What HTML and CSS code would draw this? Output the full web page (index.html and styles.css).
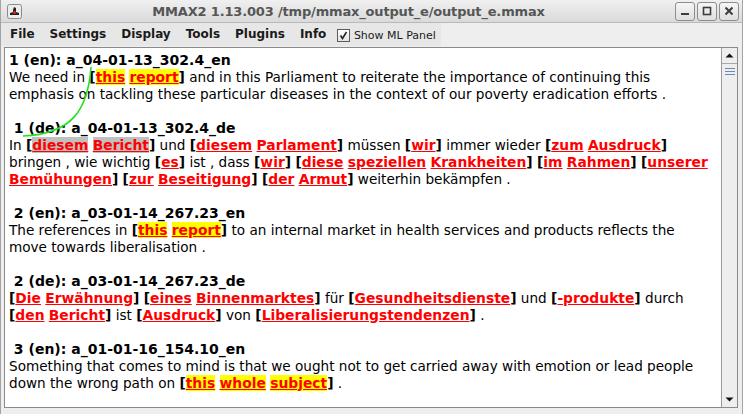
FILE: index.html
```html
<!DOCTYPE html>
<html>
<head>
<meta charset="utf-8">
<link rel="stylesheet" href="styles.css">
</head>
<body>
<div class="window">
  <div class="titlebar">
    <div class="appicon">
      <svg width="15" height="15" viewBox="0 0 15 15">
        <rect x="0.5" y="0.5" width="14" height="14" rx="2" fill="#ececec" stroke="#8c8c8c"/>
        <path d="M3 11 L12 11 L12 9 L9 8 L9 6 L6 6 L6 8 L3 9 Z" fill="#222"/>
        <path d="M6 6 L7 3 L9 4 L9 6 Z" fill="#222"/>
        <circle cx="7.5" cy="8.5" r="1.6" fill="#e02020"/>
      </svg>
    </div>
    <div class="title">MMAX2 1.13.003 /tmp/mmax_output_e/output_e.mmax</div>
    <div class="wbtns">
      <div class="wbtn"><svg width="10" height="10" viewBox="0 0 10 10"><rect x="1" y="7" width="8" height="2" fill="#3c3c3c"/></svg></div>
      <div class="wbtn"><svg width="10" height="10" viewBox="0 0 10 10"><rect x="1.5" y="1.5" width="7" height="7" fill="none" stroke="#3c3c3c" stroke-width="1.6"/></svg></div>
      <div class="wbtn"><svg width="10" height="10" viewBox="0 0 10 10"><path d="M1.5 1.5 L8.5 8.5 M8.5 1.5 L1.5 8.5" stroke="#3c3c3c" stroke-width="2"/></svg></div>
    </div>
  </div>
  <div class="menurow">
    <div class="menubar">
      <span class="menu">File</span>
      <span class="menu">Settings</span>
      <span class="menu">Display</span>
      <span class="menu">Tools</span>
      <span class="menu">Plugins</span>
      <span class="menu">Info</span>
      <span class="mlpanel"><span class="cb"><svg width="11" height="11" viewBox="0 0 11 11"><path d="M2.5 5.5 L4.5 8.5 L8.5 2" fill="none" stroke="#222" stroke-width="1.6"/></svg></span>Show ML Panel</span>
    </div>
  </div>
  <div class="pane">
    <div class="text">
      <div class="ln hd">1 (en): a_04-01-13_302.4_en</div>
      <div class="ln">We need in <b class="b">[</b><u class="m hl">this</u> <u class="m hl">report</u><b class="b">]</b> and in this Parliament to reiterate the importance of continuing this</div>
      <div class="ln">emphasis on tackling these particular diseases in the context of our poverty eradication efforts .</div>
      <div class="ln"></div>
      <div class="ln hd"> 1 (de): a_04-01-13_302.4_de</div>
      <div class="ln">In <b class="b">[</b><u class="m sel">diesem</u> <u class="m sel">Bericht</u><b class="b">]</b> und <b class="b">[</b><u class="m">diesem</u> <u class="m">Parlament</u><b class="b">]</b> müssen <b class="b">[</b><u class="m">wir</u><b class="b">]</b> immer wieder <b class="b">[</b><u class="m">zum</u> <u class="m">Ausdruck</u><b class="b">]</b></div>
      <div class="ln">bringen , wie wichtig <b class="b">[</b><u class="m">es</u><b class="b">]</b> ist , dass <b class="b">[</b><u class="m">wir</u><b class="b">]</b> <b class="b">[</b><u class="m">diese</u> <u class="m">speziellen</u> <u class="m">Krankheiten</u><b class="b">]</b> <b class="b">[</b><u class="m">im</u> <u class="m">Rahmen</u><b class="b">]</b> <b class="b">[</b><u class="m">unserer</u></div>
      <div class="ln"><u class="m">Bemühungen</u><b class="b">]</b> <b class="b">[</b><u class="m">zur</u> <u class="m">Beseitigung</u><b class="b">]</b> <b class="b">[</b><u class="m">der</u> <u class="m">Armut</u><b class="b">]</b> weiterhin bekämpfen .</div>
      <div class="ln"></div>
      <div class="ln hd"> 2 (en): a_03-01-14_267.23_en</div>
      <div class="ln">The references in <b class="b">[</b><u class="m hl">this</u> <u class="m hl">report</u><b class="b">]</b> to an internal market in health services and products reflects the</div>
      <div class="ln">move towards liberalisation .</div>
      <div class="ln"></div>
      <div class="ln hd"> 2 (de): a_03-01-14_267.23_de</div>
      <div class="ln"><b class="b">[</b><u class="m">Die</u> <u class="m">Erwähnung</u><b class="b">]</b> <b class="b">[</b><u class="m">eines</u> <u class="m">Binnenmarktes</u><b class="b">]</b> für <b class="b">[</b><u class="m">Gesundheitsdienste</u><b class="b">]</b> und <b class="b">[</b><u class="m">-produkte</u><b class="b">]</b> durch</div>
      <div class="ln"><b class="b">[</b><u class="m">den</u> <u class="m">Bericht</u><b class="b">]</b> ist <b class="b">[</b><u class="m">Ausdruck</u><b class="b">]</b> von <b class="b">[</b><u class="m">Liberalisierungstendenzen</u><b class="b">]</b> .</div>
      <div class="ln"></div>
      <div class="ln hd"> 3 (en): a_01-01-16_154.10_en</div>
      <div class="ln">Something that comes to mind is that we ought not to get carried away with emotion or lead people</div>
      <div class="ln">down the wrong path on <b class="b">[</b><u class="m hl">this</u> <u class="m hl">whole</u> <u class="m hl">subject</u><b class="b">]</b> .</div>
    </div>
    <div class="vscroll">
      <div class="sbtn"><svg width="9" height="5" viewBox="0 0 9 5"><path d="M0.5 4.5 L4.5 0.5 L8.5 4.5 Z" fill="#111"/></svg></div>
      <div class="track">
        <div class="thumb"><svg width="10" height="7" viewBox="0 0 10 7"><path d="M0 0.5 H10 M0 3.5 H10 M0 6.5 H10" stroke="#6a8cbc" stroke-width="1"/></svg></div>
      </div>
      <div class="sbtn"><svg width="9" height="5" viewBox="0 0 9 5"><path d="M0.5 0.5 L4.5 4.5 L8.5 0.5 Z" fill="#111"/></svg></div>
    </div>
  </div>
</div>
<svg class="link" width="743" height="414" viewBox="0 0 743 414">
  <path d="M91 67 C88 110 72 134 23 136" fill="none" stroke="#22e022" stroke-width="1.6"/>
</svg>
</body>
</html>
```

FILE: styles.css
```css
html, body {
  margin: 0;
  padding: 0;
}
body {
  position: relative;
  width: 743px;
  height: 414px;
  overflow: hidden;
  background: #eeeeee;
  font-family: "DejaVu Sans", sans-serif;
  color: #000;
}
.window {
  width: 743px;
  height: 414px;
  box-sizing: border-box;
  border-left: 1px solid #a4a4a4;
  border-right: 1px solid #a4a4a4;
  display: flex;
  flex-direction: column;
  background: #eeeeee;
}
.titlebar {
  height: 22px;
  flex: none;
  display: flex;
  align-items: center;
  border-bottom: 1px solid #b9b9b9;
  background: linear-gradient(#f0f0f0, #dadada);
}
.appicon {
  width: 15px;
  height: 15px;
  margin-left: 6px;
  display: flex;
}
.title {
  flex: 1;
  text-align: center;
  font-weight: bold;
  font-size: 13px;
  letter-spacing: -0.17px;
  color: #565656;
  white-space: nowrap;
  padding-top: 1px;
}
.wbtns {
  display: flex;
  gap: 2px;
  margin-right: 3px;
}
.wbtn {
  width: 18px;
  height: 17px;
  border: 1px solid #8d8d8d;
  border-radius: 3px;
  background: linear-gradient(#f6f6f6, #dedede);
  display: flex;
  align-items: center;
  justify-content: center;
}
.menurow {
  height: 23px;
  flex: none;
  display: flex;
}
.menubar {
  display: flex;
  align-items: center;
  padding-left: 1.5px;
  padding-right: 5px;
  background: #e7e7e7;
  height: 23px;
}
.menu {
  font-weight: bold;
  font-size: 12px;
  padding: 0 7.5px;
  line-height: 23px;
  color: #1a1a1a;
}
.mlpanel {
  display: flex;
  align-items: center;
  font-size: 11px;
  color: #1a1a1a;
  margin-left: 3px;
  gap: 4px;
  padding-top: 1px;
}
.cb {
  width: 11px;
  height: 11px;
  border: 1px solid #5c5c5c;
  background: linear-gradient(#ffffff, #e2e2e2);
  display: flex;
}
.pane {
  margin: 1px 4px 0 3px;
  height: 361px;
  box-sizing: border-box;
  border: 1px solid #8a8a8a;
  display: flex;
  background: #fff;
}
.text {
  flex: 1;
  padding: 3.5px 0 0 4px;
  font-size: 13.6px;
  overflow: hidden;
}
.ln {
  height: 17px;
  line-height: 17px;
  white-space: pre;
}
.hd {
  font-weight: bold;
  font-size: 14px;
}
.b {
  font-weight: bold;
  font-size: 13.85px;
  color: #000;
}
.m {
  font-weight: bold;
  font-size: 13.85px;
  color: #ff0000;
  text-decoration: underline;
  text-decoration-color: #ff0000;
}
.hl {
  background: #ffff00;
}
.sel {
  background: #c0c0c0;
}
.vscroll {
  width: 15px;
  flex: none;
  border-left: 1px solid #9a9a9a;
  background: #eeeeee;
  display: flex;
  flex-direction: column;
}
.sbtn {
  height: 15px;
  flex: none;
  display: flex;
  align-items: center;
  justify-content: center;
  background: #eeeeee;
}
.track {
  flex: 1;
  background: #eeeeee;
}
.thumb {
  height: 16px;
  box-sizing: border-box;
  border-top: 1px solid #a8a8a8;
  display: flex;
  align-items: center;
  justify-content: center;
}
.link {
  position: absolute;
  left: 0;
  top: 0;
  pointer-events: none;
}
```
